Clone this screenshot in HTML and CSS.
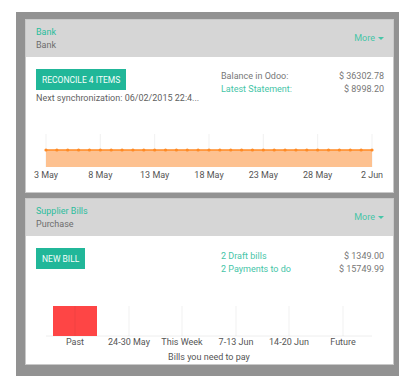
FILE: index.html
```html
<!DOCTYPE html>
<html lang="en">
<head>
    <meta charset="UTF-8">
    <meta name="viewport" content="width=device-width, initial-scale=1.0">
    <title>Accounting Dashboard</title>

    <link rel="stylesheet" href="styles.css">
</head>
<body>
    <div class="dashboard">
        <!-- Bank journal -->
        <div class="card">
            <div class="card-header">
                <div class="titles">
                    <div class="title">Bank</div>
                    <div class="subtitle">Bank</div>
                </div>
                <a class="more">More <span class="caret"></span></a>
            </div>
            <div class="card-body bank-body">
                <div class="top-row">
                    <div class="left-col">
                        <button class="btn">RECONCILE 4 ITEMS</button>
                        <div class="sync">Next synchronization: 06/02/2015 22:4...</div>
                    </div>
                    <div class="right-col">
                        <div class="line"><span>Balance in Odoo:</span><span>$ 36302.78</span></div>
                        <div class="line"><a class="link">Latest Statement:</a><span>$ 8998.20</span></div>
                    </div>
                </div>
                <svg class="chart" width="362" height="88" viewBox="0 0 362 88">
                    <g class="grid">
                        <line x1="20" y1="30" x2="20" y2="63"/>
                        <line x1="74.3" y1="30" x2="74.3" y2="63"/>
                        <line x1="128.7" y1="30" x2="128.7" y2="63"/>
                        <line x1="183" y1="30" x2="183" y2="63"/>
                        <line x1="237.3" y1="30" x2="237.3" y2="63"/>
                        <line x1="291.7" y1="30" x2="291.7" y2="63"/>
                        <line x1="346" y1="30" x2="346" y2="63"/>
                    </g>
                    <rect class="area" x="20" y="46" width="326" height="17"/>
                    <line class="trend" x1="20" y1="46" x2="346" y2="46"/>
                    <g id="dots" class="dots"></g>
                    <g class="axis">
                        <text x="20" y="74">3 May</text>
                        <text x="74.3" y="74">8 May</text>
                        <text x="128.7" y="74">13 May</text>
                        <text x="183" y="74">18 May</text>
                        <text x="237.3" y="74">23 May</text>
                        <text x="291.7" y="74">28 May</text>
                        <text x="346" y="74">2 Jun</text>
                    </g>
                </svg>
            </div>
        </div>

        <!-- Purchase journal -->
        <div class="card">
            <div class="card-header">
                <div class="titles">
                    <div class="title">Supplier Bills</div>
                    <div class="subtitle">Purchase</div>
                </div>
                <a class="more">More <span class="caret"></span></a>
            </div>
            <div class="card-body bills-body">
                <div class="top-row">
                    <div class="left-col">
                        <button class="btn">NEW BILL</button>
                    </div>
                    <div class="right-col shifted">
                        <div class="line"><a class="link">2 Draft bills</a><span>$ 1349.00</span></div>
                        <div class="line"><a class="link">2 Payments to do</a><span>$ 15749.99</span></div>
                    </div>
                </div>
                <svg class="chart" width="362" height="88" viewBox="0 0 362 88">
                    <line class="base" x1="20" y1="60" x2="346" y2="60"/>
                    <rect class="bar" x="27" y="30" width="44" height="30"/>
                    <g class="grid">
                        <line x1="49" y1="30" x2="49" y2="60"/>
                        <line x1="103" y1="30" x2="103" y2="60"/>
                        <line x1="156" y1="30" x2="156" y2="60"/>
                        <line x1="210" y1="30" x2="210" y2="60"/>
                        <line x1="263" y1="30" x2="263" y2="60"/>
                        <line x1="317" y1="30" x2="317" y2="60"/>
                    </g>
                    <g class="axis">
                        <text x="49" y="68.5">Past</text>
                        <text x="103" y="68.5">24-30 May</text>
                        <text x="156" y="68.5">This Week</text>
                        <text x="210" y="68.5">7-13 Jun</text>
                        <text x="263" y="68.5">14-20 Jun</text>
                        <text x="317" y="68.5">Future</text>
                        <text x="183" y="84">Bills you need to pay</text>
                    </g>
                </svg>
            </div>
        </div>
    </div>

    <script>
        // one dot per day on the bank balance line
        const dots = document.getElementById("dots");
        for (let i = 0; i <= 30; i++) {
            const c = document.createElementNS("http://www.w3.org/2000/svg", "circle");
            c.setAttribute("cx", 20 + i * 326 / 30);
            c.setAttribute("cy", 46);
            c.setAttribute("r", 1.6);
            dots.appendChild(c);
        }
    </script>
</body>
</html>
```

FILE: styles.css
```css
/* Dashboard styles */
body {
    margin: 0;
    background: #fff;
    font-family: Roboto, "Liberation Sans", sans-serif;
    font-size: 9px;
    color: #666;
}

.dashboard {
    width: 369px;
    margin: 12px 0 0 16px;
    padding: 7px 5px 11px 9px;
    background-color: #929292;
    display: flex;
    flex-direction: column;
    gap: 5px;
}

.card {
    border: 1px solid #c9c9c9;
    background: #fff;
}

.card-header {
    display: flex;
    align-items: center;
    justify-content: space-between;
    height: 37px;
    padding: 0 9px 0 10px;
    background-color: #d6d6d6;
    line-height: 13px;
}

.title {
    color: #2bbd9c;
}

.subtitle {
    color: #6d6d6d;
}

.more {
    color: #46c5a7;
    display: flex;
    align-items: center;
    gap: 3px;
}

.caret {
    width: 0;
    height: 0;
    border-left: 3px solid transparent;
    border-right: 3px solid transparent;
    border-top: 3px solid #46c5a7;
}

.card-body {
    display: flex;
    flex-direction: column;
    padding-top: 12px;
}

.bank-body {
    height: 123px;
}

.bills-body {
    height: 116px;
}

.top-row {
    display: flex;
    justify-content: space-between;
    padding: 0 9px 0 10px;
}

.btn {
    display: block;
    height: 21px;
    padding: 0 6px;
    border: none;
    background-color: #21b799;
    color: #f4fffc;
    font-family: Roboto, "Liberation Sans", sans-serif;
    font-size: 8.5px;
}

.sync {
    margin-top: 2px;
    line-height: 12px;
    color: #5f5f5f;
}

.right-col {
    width: 163px;
    padding-top: 1px;
    line-height: 13px;
    color: #777;
}

.right-col.shifted {
    padding-top: 2px;
}

.line {
    display: flex;
    justify-content: space-between;
}

.link {
    color: #46c5a7;
}

.chart {
    display: block;
    margin-top: auto;
}

.grid line {
    stroke: rgba(0, 0, 0, 0.06);
    stroke-width: 1;
}

.base {
    stroke: #eee;
    stroke-width: 1;
}

.area {
    fill: #fdc190;
}

.trend {
    stroke: #ff8a24;
    stroke-width: 1.5;
}

.dots circle {
    fill: #ff8a24;
}

.bar {
    fill: #fe4545;
}

.axis text {
    font-family: Roboto, "Liberation Sans", sans-serif;
    font-size: 9px;
    fill: #555;
    text-anchor: middle;
}
```
